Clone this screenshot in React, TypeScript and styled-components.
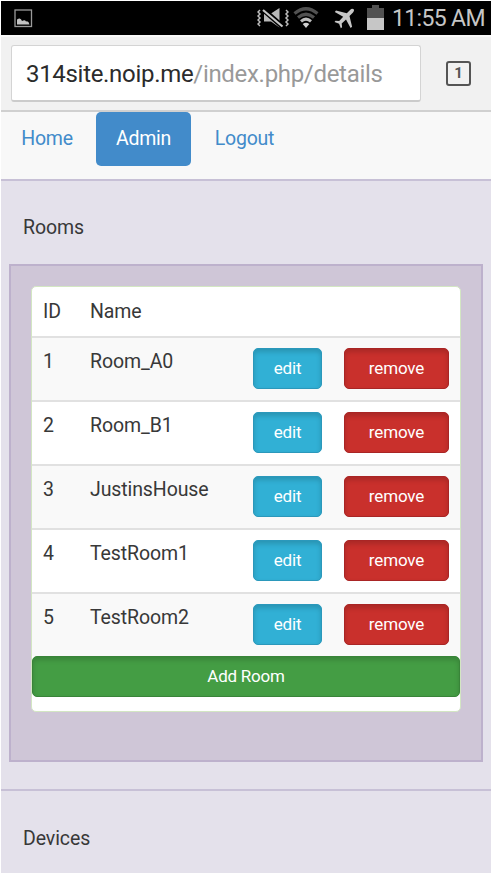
import React from "react";
import styled, { createGlobalStyle } from "styled-components";

const GlobalStyle = createGlobalStyle`
  *, *::before, *::after { box-sizing: border-box; }
  html, body { margin: 0; background: #fff; }
  body { font-family: Roboto, "Liberation Sans", sans-serif; color: #383838; overflow: hidden; }
  button { font-family: inherit; }
`;

const Screen = styled.div`
  width: 492px;
  height: 874px;
  padding: 1px;
  background: #fff;
  overflow: hidden;
  display: flex;
  flex-direction: column;
`;

const StatusBar = styled.div`
  flex: none;
  height: 34px;
  background: #000;
  display: flex;
  align-items: center;
  padding: 0 6px 0 13px;
`;

const StatusIcons = styled.div`
  margin-left: auto;
  display: flex;
  align-items: center;
`;

const Clock = styled.span`
  width: 93px;
  margin-left: 8px;
  padding-top: 1px;
  font-size: 23px;
  line-height: 34px;
  letter-spacing: -0.65px;
  color: #c6c6c6;
  white-space: nowrap;
`;

const BrowserBar = styled.div`
  flex: none;
  height: 77px;
  background: #f1f1f1;
  border-top: 2px solid #fafafa;
  border-bottom: 2px solid #d0d0d0;
  display: flex;
  align-items: center;
  padding: 0 20px 0 10px;
`;

const AddressField = styled.div`
  width: 410px;
  height: 57px;
  background: #fff;
  border: 1px solid #d4d4d4;
  border-bottom: 2px solid #cbcbcb;
  border-radius: 3px;
  padding-left: 14px;
  font-size: 24px;
  line-height: 57px;
  letter-spacing: -0.31px;
  color: #999;
  white-space: nowrap;
`;

const Host = styled.span`
  color: #2b2b2b;
`;

const TabCount = styled.div`
  width: 25px;
  height: 25px;
  margin-left: auto;
  border: 2.5px solid #555;
  border-radius: 3px;
  display: flex;
  align-items: center;
  justify-content: center;
  font-size: 15px;
  font-weight: 700;
  line-height: 1;
  color: #555;
`;

const Nav = styled.nav`
  flex: none;
  height: 67px;
  background: #f8f8f8;
  display: flex;
  gap: 3px;
`;

const NavItem = styled.a<{ $active?: boolean; $width: number }>`
  width: ${(p) => p.$width}px;
  height: 54px;
  border-radius: 5px;
  background: ${(p) => (p.$active ? "#428bca" : "transparent")};
  color: ${(p) => (p.$active ? "#fff" : "#428bca")};
  font-size: 19.5px;
  line-height: 53px;
  letter-spacing: -0.25px;
  text-align: center;
`;

const Section = styled.section<{ $height: number }>`
  flex: none;
  height: ${(p) => p.$height}px;
  background: #e4e1eb;
  border-top: 2px solid #c7c0d6;
  padding: 0 8px;
`;

const SectionTitle = styled.div<{ $offset: number }>`
  height: 83px;
  padding: ${(p) => p.$offset}px 0 0 14px;
  font-size: 19.5px;
  line-height: 70px;
  letter-spacing: -0.1px;
`;

const Panel = styled.div`
  height: 498px;
  background: #cfc6d7;
  border: 2px solid #bdb1cc;
  padding: 20px;
`;

const Card = styled.div`
  height: 426px;
  background: #fff;
  border: 1.5px solid #d3e6c3;
  border-radius: 5px;
  overflow: hidden;
`;

const HeaderRow = styled.div`
  height: 49px;
  display: grid;
  grid-template-columns: 47px 1fr;
  padding-left: 11px;
  font-size: 19.5px;
  line-height: 50px;
  letter-spacing: -0.1px;
`;

const Row = styled.div<{ $striped: boolean }>`
  height: 64px;
  display: grid;
  grid-template-columns: 47px 163px 69px 127px;
  padding-left: 11px;
  background: ${(p) => (p.$striped ? "#f9f9f9" : "#fff")};
  border-top: 2px solid #e1e1e1;
  font-size: 19.5px;
  line-height: 48px;
  letter-spacing: -0.1px;
`;

const ActionButton = styled.button<{ $tone: "info" | "danger" }>`
  height: 41px;
  margin-top: 10px;
  padding: 0;
  border: 1px solid ${(p) => (p.$tone === "info" ? "#2b98bb" : "#a92525")};
  border-radius: 5px;
  background: ${(p) => (p.$tone === "info" ? "#31b0d5" : "#c9302c")};
  box-shadow: inset 0 3px 5px rgba(0, 0, 0, 0.16);
  color: #fff;
  font-size: 17px;
  line-height: 37px;
  letter-spacing: -0.15px;
`;

const RemoveButton = styled(ActionButton)`
  margin-left: 22px;
`;

const AddButton = styled.button`
  display: block;
  width: 100%;
  height: 41px;
  padding: 0;
  border: 1px solid #398439;
  border-radius: 5px;
  background: #449d44;
  box-shadow: inset 0 3px 5px rgba(0, 0, 0, 0.16);
  color: #fff;
  font-size: 17px;
  line-height: 37px;
  letter-spacing: -0.25px;
`;

const PictureIcon = () => (
  <svg width="19" height="19" viewBox="0 0 19 19">
    <rect x="1" y="1" width="16.5" height="16.5" fill="none" stroke="#9a9a9a" strokeWidth="1.3" />
    <path d="M3 15.5V10.5L5 9.5Q7 9 8 12Q11 10.5 12 12.5Q14.5 11.5 15.5 15.5Z" fill="#c4c4c4" />
  </svg>
);

const MutedIcon = () => (
  <svg width="32" height="22" viewBox="0 0 32 22">
    <path d="M7 6.5H14L22.5 1V20.5L14 14.5H7Z" fill="#b8b8b8" />
    <path d="M5.5 2L26 20" stroke="#000" strokeWidth="5" />
    <path d="M6 3L25.5 19.5" stroke="#c6c6c6" strokeWidth="2.2" />
    <path d="M3 3l-2 2 2 2-2 2 2 2-2 2 2 2-2 2 2 2M29 3l2 2-2 2 2 2-2 2 2 2-2 2 2 2-2 2" fill="none" stroke="#bbb" strokeWidth="1.5" />
  </svg>
);

const WifiIcon = () => (
  <svg width="26" height="22" viewBox="0 0 26 22">
    <path d="M1.5 6.5Q13-3 24.5 6.5M5 10.5Q13 4 21 10.5" fill="none" stroke="#515151" strokeWidth="3.2" />
    <path d="M8 14.3Q13 10 18 14.3" fill="none" stroke="#bdbdbd" strokeWidth="3" />
    <path d="M9.7 17Q13 14.5 16.3 17L13 21Z" fill="#d0d0d0" />
  </svg>
);

const PlaneIcon = () => (
  <svg width="21" height="21" viewBox="0 0 21 21">
    <path
      d="M19.7 1.2Q18-.1 16.3 1.7L12.8 5.2 2 2.6.8 4.1 9.2 8.8 5.2 13.1 1.5 12.8.5 14 5.1 15.8 6.8 20.3 8.1 19.2 7.7 15.6 12 11.6 16.6 20 18.1 18.8 15.5 8 19 4.4Q20.6 2.7 19.7 1.2Z"
      fill="#c6c6c6"
    />
  </svg>
);

const BatteryIcon = () => (
  <svg width="17" height="25" viewBox="0 0 17 25">
    <path d="M5 0H12V3H17V13H0V3H5Z" fill="#515151" />
    <path d="M0 13H17V25H0Z" fill="#c6c6c6" />
  </svg>
);

const Glyph = styled.span<{ $gap: number }>`
  display: flex;
  margin-left: ${(p) => p.$gap}px;
`;

const BatteryGlyph = styled(Glyph)`
  margin-top: -2px;
`;

const rooms = ["Room_A0", "Room_B1", "JustinsHouse", "TestRoom1", "TestRoom2"];

export default function App() {
  return (
    <>
      <GlobalStyle />
      <Screen>
        <StatusBar>
          <PictureIcon />
          <StatusIcons>
            <Glyph $gap={0}><MutedIcon /></Glyph>
            <Glyph $gap={4}><WifiIcon /></Glyph>
            <Glyph $gap={15}><PlaneIcon /></Glyph>
            <BatteryGlyph $gap={12}><BatteryIcon /></BatteryGlyph>
            <Clock>11:55 AM</Clock>
          </StatusIcons>
        </StatusBar>
        <BrowserBar>
          <AddressField>
            <Host>314site.noip.me</Host>/index.php/details
          </AddressField>
          <TabCount>1</TabCount>
        </BrowserBar>
        <Nav>
          <NavItem $width={92}>Home</NavItem>
          <NavItem $width={95} $active>Admin</NavItem>
          <NavItem $width={101}>Logout</NavItem>
        </Nav>
        <Section $height={610}>
          <SectionTitle $offset={12}>Rooms</SectionTitle>
          <Panel>
            <Card>
              <HeaderRow>
                <span>ID</span>
                <span>Name</span>
              </HeaderRow>
              {rooms.map((name, i) => (
                <Row key={name} $striped={i % 2 === 0}>
                  <span>{i + 1}</span>
                  <span>{name}</span>
                  <ActionButton $tone="info">edit</ActionButton>
                  <RemoveButton $tone="danger">remove</RemoveButton>
                </Row>
              ))}
              <AddButton>Add Room</AddButton>
            </Card>
          </Panel>
        </Section>
        <Section $height={84}>
          <SectionTitle $offset={13}>Devices</SectionTitle>
        </Section>
      </Screen>
    </>
  );
}
